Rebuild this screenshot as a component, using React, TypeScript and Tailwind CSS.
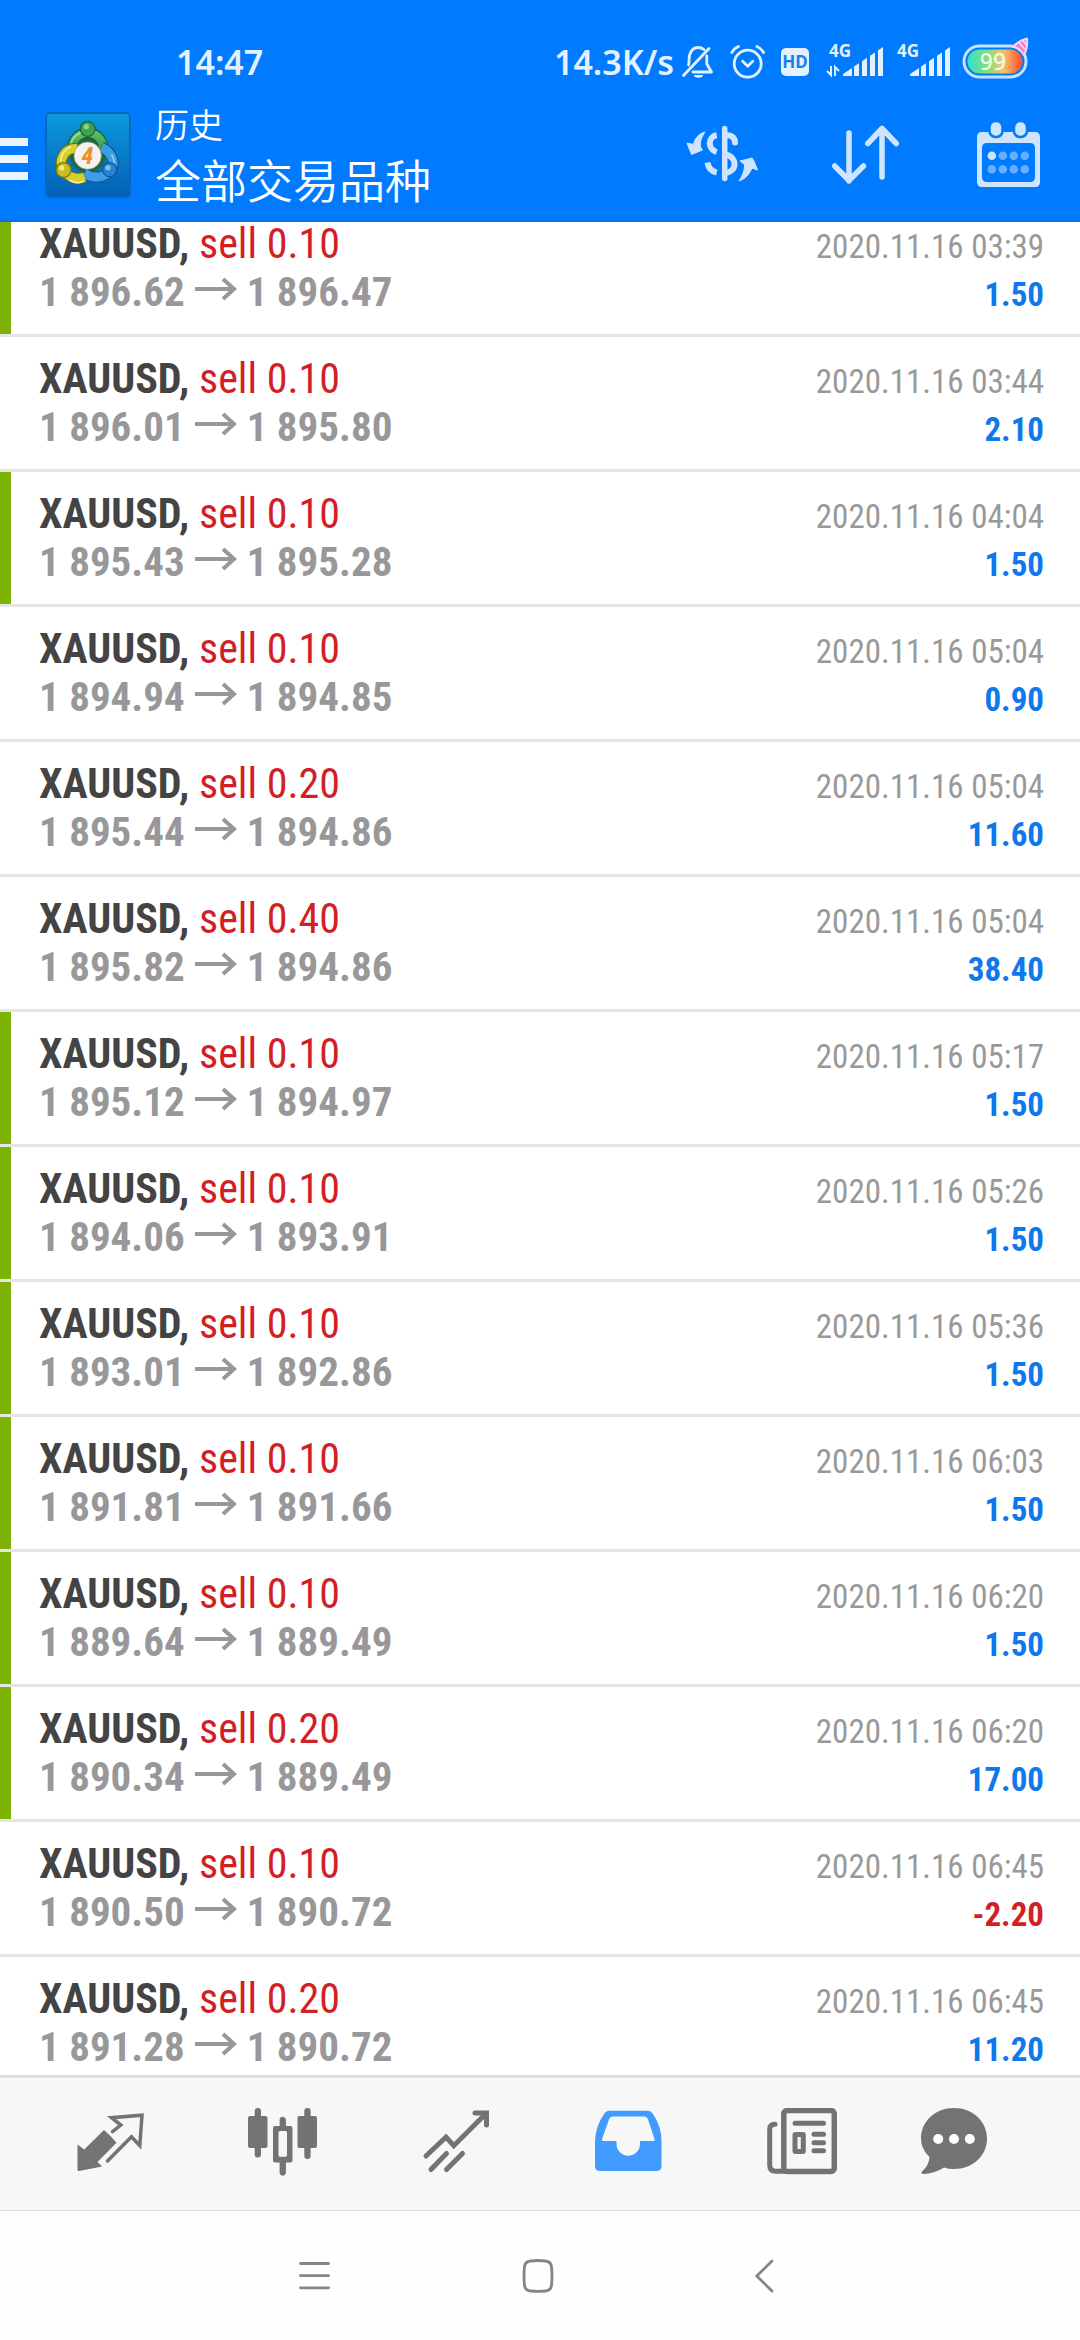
import React from 'react';

type Deal = {
  lots: string;
  open: string;
  close: string;
  time: string;
  profit: string;
  marked?: boolean;
};

const deals: Deal[] = [
  { lots: '0.10', open: '1 896.62', close: '1 896.47', time: '2020.11.16 03:39', profit: '1.50', marked: true },
  { lots: '0.10', open: '1 896.01', close: '1 895.80', time: '2020.11.16 03:44', profit: '2.10' },
  { lots: '0.10', open: '1 895.43', close: '1 895.28', time: '2020.11.16 04:04', profit: '1.50', marked: true },
  { lots: '0.10', open: '1 894.94', close: '1 894.85', time: '2020.11.16 05:04', profit: '0.90' },
  { lots: '0.20', open: '1 895.44', close: '1 894.86', time: '2020.11.16 05:04', profit: '11.60' },
  { lots: '0.40', open: '1 895.82', close: '1 894.86', time: '2020.11.16 05:04', profit: '38.40' },
  { lots: '0.10', open: '1 895.12', close: '1 894.97', time: '2020.11.16 05:17', profit: '1.50', marked: true },
  { lots: '0.10', open: '1 894.06', close: '1 893.91', time: '2020.11.16 05:26', profit: '1.50', marked: true },
  { lots: '0.10', open: '1 893.01', close: '1 892.86', time: '2020.11.16 05:36', profit: '1.50', marked: true },
  { lots: '0.10', open: '1 891.81', close: '1 891.66', time: '2020.11.16 06:03', profit: '1.50', marked: true },
  { lots: '0.10', open: '1 889.64', close: '1 889.49', time: '2020.11.16 06:20', profit: '1.50', marked: true },
  { lots: '0.20', open: '1 890.34', close: '1 889.49', time: '2020.11.16 06:20', profit: '17.00', marked: true },
  { lots: '0.10', open: '1 890.50', close: '1 890.72', time: '2020.11.16 06:45', profit: '-2.20' },
  { lots: '0.20', open: '1 891.28', close: '1 890.72', time: '2020.11.16 06:45', profit: '11.20' },
];

const BARS = 'M17 32v-2l9-6v8z M28 32v-9.4l5-3.4V32z M36 32V17.2l5-3.4V32z M44 32V11.8l5-3.4V32z M52 32V6.4L57 3v29z';

const StatusBar = () => (
  <div className="flex h-[90px] items-center justify-between pl-[176px] pr-[52px] pt-[44px] pb-[10px] font-['Noto_Sans',sans-serif] text-[34px] leading-9 font-semibold text-[#e3f1ff]">
    <span>14:47</span>
    <div className="flex items-center gap-3">
      <span className="-mr-1">14.3K/s</span>

      {/* Muted bell */}
      <svg width="36" height="36" viewBox="0 0 36 36" fill="none" stroke="#e3f1ff" strokeWidth="2.8" strokeLinecap="round">
        <path d="M1.5 31.5 27 4.5" />
        <path d="M6.5 21C7.5 18 6.8 14 7.5 11.5C9 6 12.5 3.5 16 3.5c2.5 0 4.5.8 6 2" />
        <path d="M24.8 12v8l4.7 8H11" strokeLinejoin="round" />
        <path d="M12 31h9a4.5 2.8 0 0 1-9 0z" fill="#e3f1ff" stroke="none" />
      </svg>

      {/* Alarm */}
      <svg width="36" height="36" viewBox="0 0 36 36" fill="none" stroke="#e3f1ff" strokeWidth="2.8" strokeLinecap="round" strokeLinejoin="round">
        <circle cx="17.7" cy="19.7" r="13.5" />
        <path d="m12.7 17.2 5 5 5-5" />
        <path d="M1.8 8.5C3.5 5.6 5.8 3.6 8.5 2.5M33.6 8.5c-1.7-2.9-4-4.9-6.7-6" />
      </svg>

      {/* HD badge */}
      <svg width="36" height="36" viewBox="0 0 36 36">
        <rect x="3" y="4" width="28" height="28" rx="5" fill="#e3f1ff" />
        <text x="17" y="24" textAnchor="middle" fontSize="17" fontWeight="700" fill="#1a7fee">HD</text>
      </svg>

      {/* SIM 1 with data arrows */}
      <svg width="58" height="36" viewBox="0 0 58 36" fill="#e3f1ff" className="overflow-visible">
        <text x="3" y="13" fontSize="17" fontWeight="700">4G</text>
        <path d={BARS} />
        <path d="M5 22v9l-4-4M9 32v-9l4 4" fill="none" stroke="#e3f1ff" strokeWidth="2" />
      </svg>

      {/* SIM 2 */}
      <svg width="54" height="36" viewBox="3 0 54 36" fill="#e3f1ff" className="overflow-visible">
        <text x="4" y="13" fontSize="17" fontWeight="700">4G</text>
        <path d={BARS} />
      </svg>

      {/* Battery with party hat */}
      <svg width="66" height="36" viewBox="0 0 66 36" className="overflow-visible">
        <defs>
          <linearGradient id="charge">
            <stop offset="0" stopColor="#35dfc8" />
            <stop offset="0.35" stopColor="#7fe07f" />
            <stop offset="0.65" stopColor="#f3c66a" />
            <stop offset="1" stopColor="#ff4a30" />
          </linearGradient>
        </defs>
        <rect x="2" y="2" width="62" height="31" rx="15.5" fill="none" stroke="#c6e2ff" strokeWidth="3" />
        <rect x="5.5" y="5.5" width="55" height="24" rx="12" fill="url(#charge)" />
        <text x="31" y="25.5" textAnchor="middle" fontSize="23" fontWeight="500" fill="#effbe6">99</text>
        <path d="M51 2.5Q58-4 65-5.5Q66 4 62 11Q57 4 51 2.5z" fill="#ee7fd0" stroke="#fbd3f2" strokeWidth="2" strokeLinejoin="round" />
        <path d="m57-1.5 6 7M61-3.5l3 4" stroke="#fbe3f7" strokeWidth="1.5" />
      </svg>
    </div>
  </div>
);

const AppLogo = () => (
  <svg width="86" height="86" viewBox="0 0 258 258" fill="none">
    <defs>
      <linearGradient id="tile" x2="0" y2="1">
        <stop offset="0" stopColor="#0a9ade" />
        <stop offset="1" stopColor="#0560b4" />
      </linearGradient>
      <linearGradient id="green" x2="0" y2="1">
        <stop offset="0" stopColor="#5fc06a" />
        <stop offset="1" stopColor="#2c8f35" />
      </linearGradient>
    </defs>
    <rect x="3" y="3" width="252" height="252" rx="12" fill="url(#tile)" stroke="#0a66bf" strokeWidth="6" />
    <circle cx="128" cy="128" r="54" fill="#1d6b3c" />
    <path d="M84 122A46 46 0 1 1 172 122" stroke="#175a3a" strokeWidth="32" />
    <path d="M84 122A46 46 0 1 1 172 122" stroke="url(#green)" strokeWidth="25" />
    <path d="M77 98A50 50 0 0 1 108 62" stroke="#a6e0a0" strokeWidth="5" />
    <path d="M170 106C205 122 214 160 194 178 172 200 145 200 118 184" stroke="#114f8c" strokeWidth="33" />
    <path d="M170 106C205 122 214 160 194 178 172 200 145 200 118 184" stroke="#3c9fe4" strokeWidth="27" />
    <path d="M200 128c12 20 10 36-2 48" stroke="#8fd0f7" strokeWidth="5" />
    <path d="M96 110C58 106 40 146 53 172c14 24 42 32 66 24" stroke="#6b6a12" strokeWidth="33" />
    <path d="M96 110C58 106 40 146 53 172c14 24 42 32 66 24" stroke="#d9cf2c" strokeWidth="27" />
    <path d="M78 104c-20 8-30 26-31 44M72 204c14 9 32 10 44 4" stroke="#f4ef9a" strokeWidth="5" />
    <circle cx="128" cy="51" r="22" fill="#3fa54d" stroke="#1d6a37" strokeWidth="4" />
    <circle cx="124" cy="44" r="8" fill="#8ad68d" />
    <circle cx="56" cy="174" r="22" fill="#c9be1e" stroke="#7c7a18" strokeWidth="4" />
    <circle cx="50" cy="168" r="8" fill="#f0ea7a" />
    <circle cx="194" cy="173" r="21" fill="#2b83cf" stroke="#15559a" strokeWidth="4" />
    <circle cx="189" cy="167" r="8" fill="#7cc3f2" />
    <circle cx="128" cy="131" r="41" fill="#f4f1ee" stroke="#8c9a8c" strokeWidth="2" />
    <text x="127" y="156" textAnchor="middle" fontSize="72" fontWeight="700" fontStyle="italic" fill="#ef8f2a" fontFamily="Roboto Condensed, sans-serif">4</text>
  </svg>
);

const Toolbar = () => (
  <div className="flex h-[130px] items-center pr-9">
    <button aria-label="menu" className="flex h-full w-7 flex-col items-start justify-center gap-[9px] pt-2">
      <span className="h-2 w-full bg-[#eaf4ff]" />
      <span className="h-2 w-full bg-[#eaf4ff]" />
      <span className="h-2 w-full bg-[#eaf4ff]" />
    </button>
    <div className="ml-[17px]">
      <AppLogo />
    </div>
    <div className="ml-6 flex-1 pb-1 font-['Noto_Sans_CJK_SC',sans-serif] font-[350] text-white">
      <p className="text-[34px] leading-[50px]">历史</p>
      <h1 className="text-[46px] leading-[58px]">全部交易品种</h1>
    </div>
    <div className="flex items-center gap-[71px]">
      <button aria-label="symbols">
        <svg width="72" height="60" viewBox="0 0 72 60" fill="none" stroke="#cfe4ff" strokeWidth="6">
          <path d="M38.7 3.5v50" strokeWidth="5.5" strokeLinecap="round" />
          <path d="M30.7 10C21.5 12 21.5 24 30.7 27M21.5 37.5C22.5 44 26 46.5 30.7 47.5" />
          <path d="M39 10.5c6-1 10 2 10 7" strokeLinecap="round" />
          <path d="M39 29.5c12.5 2 13 17 0 18.5" />
          <path d="M1 18l6.5 1.5C9 13 13 8.5 19 7c-4 6-5 10-4.5 15l2 3L5.5 29.5z" fill="#cfe4ff" stroke="#cfe4ff" strokeWidth="1" strokeLinejoin="round" />
          <path d="M54 36l12-3 2 3 3.5 9-5.5-2C63.5 49 59.5 54 53 56c4-6 5.5-10.5 5.5-16.5z" fill="#cfe4ff" stroke="#cfe4ff" strokeWidth="1" strokeLinejoin="round" />
        </svg>
      </button>
      <button aria-label="sort">
        <svg width="72" height="60" viewBox="0 0 72 60" fill="none" stroke="#cfe5ff" strokeWidth="5.5" strokeLinecap="round" strokeLinejoin="round">
          <path d="M20 8v48M5.7 41 20 55.5 34.5 41" />
          <path d="M53 52V3.5M38.8 18.5 53 3.5 67.3 18.5" />
        </svg>
      </button>
      <button aria-label="period">
        <svg width="72" height="66" viewBox="0 0 72 66">
          <path d="M9.5 10h54a4.5 4.5 0 0 1 4.5 4.5v46a4.5 4.5 0 0 1-4.5 4.5h-54a4.5 4.5 0 0 1-4.5-4.5v-46a4.5 4.5 0 0 1 4.5-4.5zM15 21q-5 0-5 5v29q0 5 5 5h43q5 0 5-5V26q0-5-5-5z" fill="#cfe5ff" fillRule="evenodd" />
          <rect x="17.5" y="-1" width="13" height="16" rx="6" fill="#cfe5ff" stroke="#007aff" strokeWidth="2.5" />
          <rect x="42" y="-1" width="13" height="16" rx="6" fill="#cfe5ff" stroke="#007aff" strokeWidth="2.5" />
          <circle cx="19.8" cy="33.7" r="4.3" fill="#cfe5ff" />
          <g fill="#66b0ff">
            <circle cx="30.8" cy="33.7" r="4.3" />
            <circle cx="41.8" cy="33.7" r="4.3" />
            <circle cx="52.8" cy="33.7" r="4.3" />
            <circle cx="19.8" cy="47.3" r="4.3" />
            <circle cx="30.8" cy="47.3" r="4.3" />
            <circle cx="41.8" cy="47.3" r="4.3" />
            <circle cx="52.8" cy="47.3" r="4.3" />
          </g>
        </svg>
      </button>
    </div>
  </div>
);

const DealRow = ({ deal }: { deal: Deal }) => (
  <li className="flex h-[135px] border-b-[3px] border-[#e5e5e5]">
    <div className={deal.marked ? 'w-[11px] bg-[#7cb305]' : 'w-[11px]'} />
    <div className="flex-1 pl-7 pr-9 pt-[18px]">
      <div className="flex items-baseline justify-between">
        <p className="text-[42px] leading-[48px] text-[#d21f26]">
          <span className="font-bold text-[#444]">XAUUSD,</span> sell {deal.lots}
        </p>
        <time className="text-[33px] leading-9 text-[#999]">{deal.time}</time>
      </div>
      <div className="flex items-baseline justify-between font-bold">
        <p className="flex items-baseline gap-[10px] text-[41px] leading-[48px] text-[#98989b]">
          {deal.open}
          <svg width="42" height="29" viewBox="0 0 42 29" fill="none" stroke="#98989b" strokeWidth="4">
            <path d="M0 12h39M28 2l11 10-11 10" />
          </svg>
          {deal.close}
        </p>
        <span className={deal.profit.startsWith('-') ? 'text-[33px] leading-9 text-[#d21f26]' : 'text-[33px] leading-9 text-[#0f78ec]'}>
          {deal.profit}
        </span>
      </div>
    </div>
  </li>
);

const TabBar = () => (
  <nav className="grid h-[136px] grid-cols-6 place-items-center border-t-[3px] border-b border-t-[#dedede] border-b-[#dcdcdc] bg-[#f7f7f7] pl-6 pr-5">
    <button aria-label="quotes">
      <svg width="72" height="72" viewBox="0 0 72 72">
        <path d="M3.5 36.5l6.7 5L30 22q6 5 12.5 12.7L23.5 54l4.7 4.5L5 63q-1.5 0-1.5-1.5z" fill="#737373" />
        <path d="M38.5 23.7 46.8 17 37.5 9.7 68 7.2 65.8 37.7 57.5 28.7 33.5 53" fill="none" stroke="#737373" strokeWidth="3.5" strokeLinecap="round" />
      </svg>
    </button>
    <button aria-label="charts">
      <svg width="72" height="72" viewBox="0 0 72 72" fill="#737373">
        <rect x="1" y="8" width="19.5" height="32" rx="2" />
        <rect x="7.7" y="0" width="6.3" height="49.5" rx="3" />
        <path d="M28 18h15.5q2 0 2 2v32.5q0 2-2 2H28q-2 0-2-2V20q0-2 2-2zm5 5q-1.5 0-1.5 1.5V47q0 1.8 1.5 1.8h5.5q1.5 0 1.5-1.8V24.5q0-1.5-1.5-1.5z" fillRule="evenodd" />
        <path d="M32.6 20v-8.5a3.2 3.2 0 0 1 6.3 0V20zM32.6 53v12a3.2 3.2 0 0 0 6.3 0V53z" />
        <rect x="50.5" y="8" width="19.5" height="32" rx="2" />
        <rect x="57.3" y="0" width="6.3" height="51" rx="3" />
      </svg>
    </button>
    <button aria-label="trade">
      <svg width="72" height="72" viewBox="0 0 72 72" fill="none" stroke="#737373" strokeWidth="5" strokeLinecap="round">
        <path d="M6 48 26 29l7.8 8.7L65.5 6" />
        <path d="M55 5h11.5v12" />
        <path d="M11 61.5 26.5 45.5M26.5 61.5 42.5 45.5" />
      </svg>
    </button>
    <button aria-label="history" aria-current="page">
      <svg width="72" height="72" viewBox="0 0 72 72">
        <path d="M17 2.7h39q3 0 4.5 2.5Q69.5 18 69.5 33v25q0 5-5 5H8q-5 0-5-5V33Q3.5 18 12.5 5.2 14 2.7 17 2.7zM21 8.5q-3 0-4 3L10 31q-.5 2 1 2h13.5v3a11.7 11.7 0 0 0 23.5 0v-3h13.5q1.5 0 1-2L56 11.5q-1-3-4-3z" fill="#429bff" fillRule="evenodd" />
      </svg>
    </button>
    <button aria-label="news">
      <svg width="72" height="72" viewBox="0 0 72 72" fill="none" stroke="#737373" strokeWidth="5" strokeLinecap="round">
        <rect x="18.8" y="2.5" width="50.5" height="61" rx="3.5" strokeWidth="5.5" />
        <path d="M10 16.2q-5.3 0-5.3 5V57q0 6.3 6 6.3h9" />
        <path d="M30 15.3h28.5M49 26.3h9.5M49 34.7h9.5M49 42.7h9.5" />
        <rect x="30" y="26.5" width="8.3" height="17" rx="0.5" />
      </svg>
    </button>
    <button aria-label="messages">
      <svg width="106" height="72" viewBox="0 0 106 72" fill="#737373">
        <path d="M33 0c18.5 0 33 13 33 30.5S51.5 61 33 61q-6 0-10-1.5Q13 66 2 66q-2.5-.5-1-2.5 7-6 7.5-14.5Q0 41 0 30.5C0 13 14.5 0 33 0z" />
        <g fill="#fff">
          <circle cx="17.2" cy="31" r="5" />
          <circle cx="33" cy="31" r="5" />
          <circle cx="48.8" cy="31" r="5" />
        </g>
      </svg>
    </button>
  </nav>
);

const SystemBar = () => (
  <div className="bg-[#fefefe]">
    <div className="mx-auto grid h-[129px] w-5/8 grid-cols-3 place-items-center">
      <button aria-label="recent apps">
        <svg width="34" height="34" viewBox="0 0 34 34" stroke="#858585" strokeWidth="2.8" strokeLinecap="round">
          <path d="M2.5 4.5h28M2.5 16.7h28M2.5 28.8h28" />
        </svg>
      </button>
      <button aria-label="home">
        <svg width="38" height="34" viewBox="0 0 38 34" fill="none" stroke="#858585" strokeWidth="2.8">
          <path d="M9.5 2Q17 1 24.5 2q5.5.5 6 6 1 9 0 18-.5 5.5-6 6-7.5.8-15 0-5.5-.5-6-6-1-9 0-18 .5-5.5 6-6z" />
        </svg>
      </button>
      <button aria-label="back">
        <svg width="20" height="34" viewBox="0 0 20 34" fill="none" stroke="#858585" strokeWidth="2.8" strokeLinecap="round">
          <path d="M17 2 1.8 17 17 32" />
        </svg>
      </button>
    </div>
  </div>
);

export default function App() {
  return (
    <div className="flex h-screen w-full flex-col overflow-hidden bg-white font-['Roboto_Condensed',Roboto,sans-serif]">
      <header className="border-b-2 border-[#0a70e6] bg-[#007aff]">
        <StatusBar />
        <Toolbar />
      </header>

      {/* History list, scrolled a little past its first row's top edge */}
      <main className="min-h-0 flex-1 overflow-hidden">
        <ul className="-mt-5">
          {deals.map((deal, i) => (
            <DealRow key={i} deal={deal} />
          ))}
        </ul>
      </main>

      <TabBar />
      <SystemBar />
    </div>
  );
}
